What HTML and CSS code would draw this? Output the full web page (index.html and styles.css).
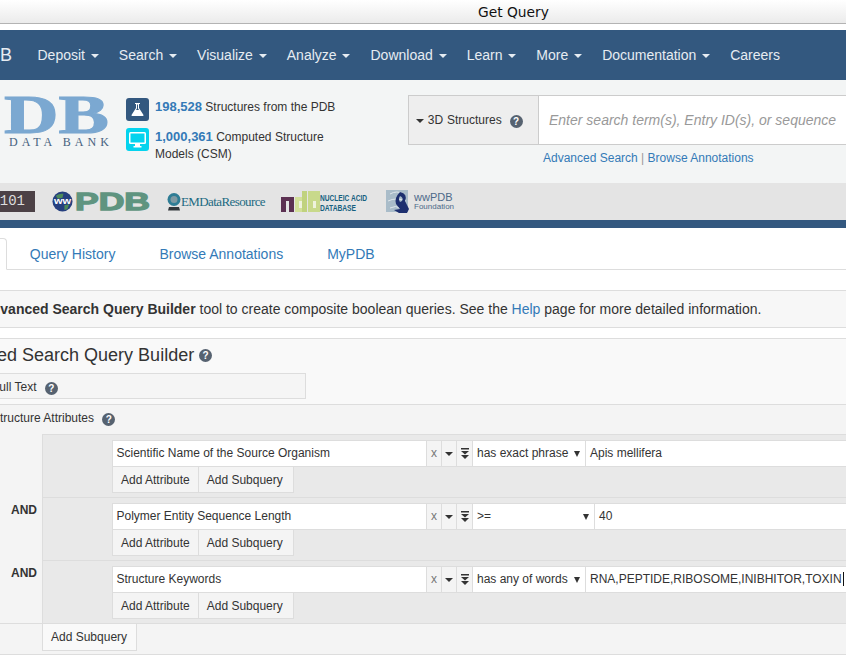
FILE: index.html
```html
<!DOCTYPE html>
<html lang="en">
<head>
  <meta charset="UTF-8">
  <title>Get Query</title>
  <link rel="stylesheet" href="styles.css">
</head>
<body>
<div class="page">

<div class="titlebar">Get Query</div>

<nav class="mainnav">
  <a class="brand">RCSB PDB</a>
  <a>Deposit <i class="caret"></i></a>
  <a>Search <i class="caret"></i></a>
  <a>Visualize <i class="caret"></i></a>
  <a>Analyze <i class="caret"></i></a>
  <a>Download <i class="caret"></i></a>
  <a>Learn <i class="caret"></i></a>
  <a>More <i class="caret"></i></a>
  <a>Documentation <i class="caret"></i></a>
  <a>Careers</a>
</nav>

<header class="masthead">
  <svg class="logo" width="110" height="54" viewBox="0 0 110 54">
    <text x="0" y="38" font-family="Liberation Serif" font-weight="700" font-size="54" fill="#7ba8d1" stroke="#7ba8d1" stroke-width="1" textLength="105" lengthAdjust="spacingAndGlyphs">DB</text>
    <text x="5" y="50.500" font-family="Liberation Serif" font-size="12" fill="#47627f" textLength="100">DATA BANK</text>
  </svg>
  <div class="stats">
    <div class="stat">
      <span class="stat-icon navy">
        <svg width="15" height="15" viewBox="0 0 15 15"><path d="M5 1h5v1H9v4l4.500 7q.3 1-.8 1H2.300q-1.100 0-.8-1L6 6V2H5z" fill="#fff"/><path d="M7 2.500h1v4l1 1.500H6l1-1.500z" fill="#33587f"/></svg>
      </span>
      <p><a>198,528</a> Structures from the PDB</p>
    </div>
    <div class="stat">
      <span class="stat-icon cyan">
        <svg width="17" height="16" viewBox="0 0 17 16"><path d="M1.500 0h14q1.500 0 1.500 1.500v9q0 1.500-1.500 1.500h-14Q0 12 0 10.500v-9Q0 0 1.500 0z" fill="#fff"/><path d="M1.500 1.500h14v9h-14z" fill="#04d3ee"/><path d="M6 12h5v2h1.500v1.500h-8V14H6z" fill="#fff"/></svg>
      </span>
      <p><a>1,000,361</a> Computed Structure Models (CSM)</p>
    </div>
  </div>
  <div class="search">
    <div class="search-box">
      <div class="search-type"><i class="caret dark"></i> 3D Structures <span class="help">?</span></div>
      <div class="search-input">Enter search term(s), Entry ID(s), or sequence</div>
    </div>
    <div class="search-links"><a>Advanced Search</a> <span>|</span> <a>Browse Annotations</a></div>
  </div>
</header>

<div class="logobar">
  <span class="logo-101">101</span>
  <span class="logo-wwpdb">
    <svg width="21" height="21" viewBox="0 0 22 22">
      <circle cx="11" cy="11" r="10.500" fill="#26407f"/>
      <path d="M4 5q4-3 8-2l-1 4-5 1zM13 15l5-1-2 5-3 1z" fill="#4d8a5a"/>
      <text x="11" y="14" text-anchor="middle" font-family="Liberation Sans" font-weight="700" font-size="9" fill="#fff" textLength="18" lengthAdjust="spacingAndGlyphs">ww</text>
    </svg>
    <svg width="78" height="20" viewBox="0 0 78 20">
      <text x="1" y="18" font-family="Liberation Sans" font-weight="700" font-size="24" fill="#5f9480" stroke="#5f9480" stroke-width="1.300" textLength="75" lengthAdjust="spacingAndGlyphs">PDB</text>
    </svg>
  </span>
  <span class="logo-emdr">
    <svg width="14" height="18" viewBox="0 0 14 18">
      <circle cx="7" cy="6.500" r="6.500" fill="#2f7d95"/>
      <circle cx="7" cy="6.500" r="3.500" fill="#7f9aa3"/>
      <path d="M2 14h10l1 3.500H1z" fill="#33383c"/>
    </svg>
    <span>EMDataResource</span>
  </span>
  <span class="logo-ndb">
    <svg width="88" height="22" viewBox="0 0 88 22">
      <rect x="1" y="6" width="13" height="15" fill="#5c3152"/>
      <rect x="6" y="10" width="3" height="11" fill="#e4e4e4"/>
      <rect x="15" y="6" width="12" height="15" fill="#d3e09a"/>
      <rect x="22" y="0" width="5" height="21" fill="#c0d27e"/>
      <rect x="19" y="10" width="3" height="7" fill="#eef2dd"/>
      <rect x="28" y="0" width="12" height="21" fill="#c8d98b"/>
      <rect x="33" y="10" width="3" height="7" fill="#eef2dd"/>
      <text x="40" y="10" font-family="Liberation Sans" font-weight="700" font-size="9.500" fill="#14607f" textLength="47" lengthAdjust="spacingAndGlyphs">NUCLEIC ACID</text>
      <text x="40" y="19.500" font-family="Liberation Sans" font-weight="700" font-size="9.500" fill="#14607f" textLength="36" lengthAdjust="spacingAndGlyphs">DATABASE</text>
    </svg>
  </span>
  <span class="logo-found">
    <svg width="26" height="23" viewBox="0 0 26 23">
      <rect x="0" y="0" width="22" height="22" fill="#a9bcc9"/>
      <path d="M4 4q7-4 13 0M2 11q8-4 18 0M4 18q6-3 10 0" stroke="#dfe7ec" fill="none"/>
      <path d="M14 2q8 2 5 9l4 8-2 4h-8l-5-3 6-1-4-5q-2-6 4-12zM14 6q-2 3 0 6l2-1q2-3-2-5z" fill="#1d2f6f"/>
    </svg>
    <span class="found-name">wwPDB<small>Foundation</small></span>
  </span>
</div>

<div class="bluebar"></div>

<ul class="tabs">
  <li class="active">Search</li>
  <li><a>Query History</a></li>
  <li><a>Browse Annotations</a></li>
  <li><a>MyPDB</a></li>
</ul>

<div class="infobox">
  Use the <b>Advanced Search Query Builder</b> tool to create composite boolean queries. See the <a>Help</a> page for more detailed information.
</div>

<section class="builder">
  <h2>Advanced Search Query Builder <span class="help">?</span></h2>
  <div class="fulltext">Full Text <span class="help">?</span></div>

  <div class="attrs">
    <div class="attrs-title">Structure Attributes <span class="help">?</span></div>

    <div class="group">
      <div class="group-op"></div>
      <div class="group-body">
        <div class="row">
          <div class="cell name">Scientific Name of the Source Organism</div>
          <div class="cell ctl x">x</div>
          <div class="cell ctl"><i class="caret dark"></i></div>
          <div class="cell ctl dbl"><svg width="8" height="11" viewBox="0 0 8 11"><path d="M0 0h8v1.500H0zM0 3h8L4 6.500zM0 7h8l-4 4z" fill="#333"/></svg></div>
          <div class="cell select">has exact phrase<span class="arrow"></span></div>
          <div class="cell value">Apis mellifera</div>
        </div>
        <div class="btns"><a>Add Attribute</a><a>Add Subquery</a></div>
      </div>
    </div>

    <div class="group">
      <div class="group-op">AND</div>
      <div class="group-body">
        <div class="row">
          <div class="cell name">Polymer Entity Sequence Length</div>
          <div class="cell ctl x">x</div>
          <div class="cell ctl"><i class="caret dark"></i></div>
          <div class="cell ctl dbl"><svg width="8" height="11" viewBox="0 0 8 11"><path d="M0 0h8v1.500H0zM0 3h8L4 6.500zM0 7h8l-4 4z" fill="#333"/></svg></div>
          <div class="cell select wide">&gt;=<span class="arrow"></span></div>
          <div class="cell value">40</div>
        </div>
        <div class="btns"><a>Add Attribute</a><a>Add Subquery</a></div>
      </div>
    </div>

    <div class="group">
      <div class="group-op">AND</div>
      <div class="group-body">
        <div class="row">
          <div class="cell name">Structure Keywords</div>
          <div class="cell ctl x">x</div>
          <div class="cell ctl"><i class="caret dark"></i></div>
          <div class="cell ctl dbl"><svg width="8" height="11" viewBox="0 0 8 11"><path d="M0 0h8v1.500H0zM0 3h8L4 6.500zM0 7h8l-4 4z" fill="#333"/></svg></div>
          <div class="cell select">has any of words<span class="arrow"></span></div>
          <div class="cell value"><span class="typed">RNA,PEPTIDE,RIBOSOME,INIBHITOR,TOXIN</span></div>
        </div>
        <div class="btns"><a>Add Attribute</a><a>Add Subquery</a></div>
      </div>
    </div>

    <div class="outer-add"><a>Add Subquery</a></div>
  </div>
</section>

</div>
</body>
</html>
```

FILE: styles.css
```css
html, body {
  margin: 0;
  height: 100%;
  overflow: hidden;
  background-color: white;
}
.page {
  width: 1100px;
  margin-left: -100px;
  font-family: "Liberation Sans", Arial, sans-serif;
  font-size: 14px;
  line-height: 20px;
  color: #333;
}
a {
  color: #337ab7;
}
.caret {
  display: inline-block;
  width: 0;
  height: 0;
  margin-left: 2px;
  vertical-align: middle;
  border-top: 4px solid;
  border-left: 4px solid transparent;
  border-right: 4px solid transparent;
}
.caret.dark {
  margin-left: 0;
  color: #333;
}
.help {
  display: inline-block;
  width: 13px;
  height: 13px;
  margin-left: 4px;
  border-radius: 50%;
  background-color: #566270;
  color: white;
  font-size: 10px;
  font-weight: bold;
  line-height: 13px;
  text-align: center;
  vertical-align: -1px;
}

.titlebar {
  height: 23px;
  padding-left: 578px;
  border-bottom: 1px solid #b3b3b3;
  background: linear-gradient(#ffffff, #ebebeb);
  font-family: "DejaVu Sans", sans-serif;
  font-size: 13.800px;
  line-height: 25px;
  color: #111;
}

.mainnav {
  display: flex;
  align-items: center;
  gap: 20px;
  height: 50px;
  margin-top: 6px;
  background-color: #33587f;
}
.mainnav a {
  color: #e6ecf2;
  white-space: nowrap;
}
.mainnav .brand {
  width: 112px;
  margin-right: 5.500px;
  font-size: 18px;
  text-align: right;
}

.masthead {
  display: flex;
  height: 88px;
  padding: 15px 0 0 104px;
  background-color: #f3f5f5;
}
.logo {
  display: block;
  flex: none;
}
.stats {
  flex: none;
  width: 282px;
  margin-left: 12px;
  padding-top: 3px;
  font-size: 12px;
  line-height: 17px;
}
.stat {
  display: flex;
  gap: 6px;
  margin-bottom: 7px;
}
.stat p {
  width: 185px;
  margin: 0;
}
.stat a {
  font-size: 13px;
  font-weight: bold;
}
.stat-icon {
  display: flex;
  flex: none;
  align-items: center;
  justify-content: center;
  width: 23px;
  height: 23px;
  border-radius: 3px;
}
.stat-icon.navy {
  background-color: #33587f;
}
.stat-icon.cyan {
  background-color: #04d3ee;
}
.search {
  flex: 1;
}
.search-box {
  display: flex;
  height: 50px;
  border: 1px solid #ccc;
  box-sizing: border-box;
}
.search-type {
  flex: none;
  width: 130px;
  box-sizing: border-box;
  padding-left: 7px;
  border-right: 1px solid #ccc;
  background-color: #eee;
  font-size: 12px;
  line-height: 48px;
  word-spacing: .5px;
}
.search-type .help {
  margin-left: 4px;
}
.search-input {
  flex: 1;
  padding-left: 10px;
  background-color: white;
  color: #999;
  font-style: italic;
  line-height: 48px;
}
.search-links {
  margin-left: 135px;
  padding-top: 3px;
  font-size: 12px;
}
.search-links span {
  color: #999;
}

.logobar {
  display: flex;
  align-items: center;
  height: 37px;
  background-color: #e4e4e4;
}
.logobar > span {
  flex: none;
}
.logo-101 {
  width: 65px;
  height: 21px;
  margin-left: 70px;
  padding-right: 10px;
  box-sizing: border-box;
  background-color: #4c4146;
  color: #ddd;
  font-family: "Liberation Mono", monospace;
  font-size: 14px;
  line-height: 21px;
  text-align: right;
}
.logo-wwpdb {
  display: flex;
  align-items: center;
  gap: 1px;
  margin-left: 17px;
}
.logo-emdr {
  display: flex;
  align-items: center;
  margin-left: 15px;
  font-family: "Liberation Serif", serif;
  font-size: 13px;
  letter-spacing: -.6px;
  color: #1c6a82;
}
.logo-ndb {
  display: flex;
  margin-left: 15px;
}
.logo-found {
  display: flex;
  align-items: center;
  margin-left: 18px;
}
.found-name {
  margin-left: 2px;
  font-size: 11px;
  line-height: 9px;
  color: #4d6a8a;
}
.found-name small {
  display: block;
  font-size: 8px;
}

.bluebar {
  height: 8px;
  background-color: #33587f;
}

.tabs {
  display: flex;
  height: 31px;
  margin: 0;
  padding: 10px 0 0 17.500px;
  border-bottom: 1px solid #ddd;
  list-style: none;
}
.tabs li {
  height: 32px;
  padding: 6px 22px;
  box-sizing: border-box;
}
.tabs .active {
  margin-right: 1px;
  padding-right: 21px;
  border: 1px solid #ddd;
  border-bottom-color: white;
  border-radius: 4px 4px 0 0;
  background-color: white;
}

.infobox {
  height: 36px;
  margin-top: 20px;
  padding-left: 29.500px;
  border-top: 1px solid #ddd;
  border-bottom: 1px solid #ddd;
  background-color: #f7f7f7;
  line-height: 37px;
  white-space: nowrap;
}

.builder {
  margin-top: 10px;
  padding-top: 6px;
  border-top: 1px solid #ddd;
  background-color: #f9f9f9;
}
.builder h2 {
  margin: 0;
  padding-left: 37px;
  font-size: 18px;
  font-weight: normal;
  line-height: 20px;
}
.builder h2 .help {
  margin-left: 0;
  vertical-align: 2px;
}
.fulltext {
  width: 313px;
  height: 24px;
  margin: 8px 0 0 90px;
  padding-left: 1px;
  border: 1px solid #ddd;
  background-color: #f5f5f5;
  font-size: 12px;
  line-height: 26px;
}
.fulltext .help {
  margin-left: 5px;
}
.attrs {
  height: 249px;
  margin-top: 5px;
  border-top: 1px solid #ddd;
  border-bottom: 1px solid #ddd;
  background-color: #f4f4f4;
  font-size: 12px;
}
.attrs-title {
  height: 29px;
  padding-left: 92px;
  line-height: 27px;
}
.attrs-title .help {
  margin-left: 5px;
}
.group {
  display: flex;
}
.group-op {
  flex: none;
  width: 137px;
  margin-right: 5px;
  padding-top: 3px;
  box-sizing: border-box;
  font-weight: bold;
  line-height: 20px;
  text-align: right;
}
.group-body {
  flex: 1;
  height: 57px;
  padding: 5px 0 0 69px;
  border-top: 1px solid #ddd;
  border-left: 1px solid #ddd;
  background-color: #e9e9e9;
}
.row {
  display: flex;
  height: 25px;
  border: 1px solid #ddd;
  border-right: none;
  background-color: white;
  line-height: 25px;
}
.cell {
  flex: none;
  box-sizing: border-box;
  padding-left: 3.500px;
  border-right: 1px solid #ddd;
}
.cell.name {
  width: 314px;
}
.cell.ctl {
  display: flex;
  align-items: center;
  justify-content: center;
  width: 15px;
  padding: 0;
  background-color: #f4f4f4;
}
.cell.dbl {
  width: 16px;
}
.cell.x {
  color: #777;
}
.cell.select {
  position: relative;
  width: 113px;
  padding-left: 4px;
}
.cell.select.wide {
  width: 122px;
}
.arrow {
  position: absolute;
  top: 10px;
  right: 5px;
  border-top: 6px solid #333;
  border-left: 3px solid transparent;
  border-right: 3px solid transparent;
}
.cell.value {
  flex: 1;
  padding-left: 4px;
  border-right: none;
}
.typed {
  padding-right: 1px;
  border-right: 1px solid #111;
}
.btns {
  display: flex;
}
.btns a, .outer-add a {
  height: 25px;
  padding: 0 8px;
  border: 1px solid #ddd;
  border-top: none;
  background-color: #f4f4f4;
  color: #333;
  line-height: 27px;
}
.btns a + a {
  padding-right: 10px;
  border-left: none;
}
.outer-add {
  display: flex;
  padding-left: 142px;
  border-top: 1px solid #ddd;
}
.outer-add a {
  height: 26px;
  padding-right: 9px;
  background-color: #f9f9f9;
}
```
